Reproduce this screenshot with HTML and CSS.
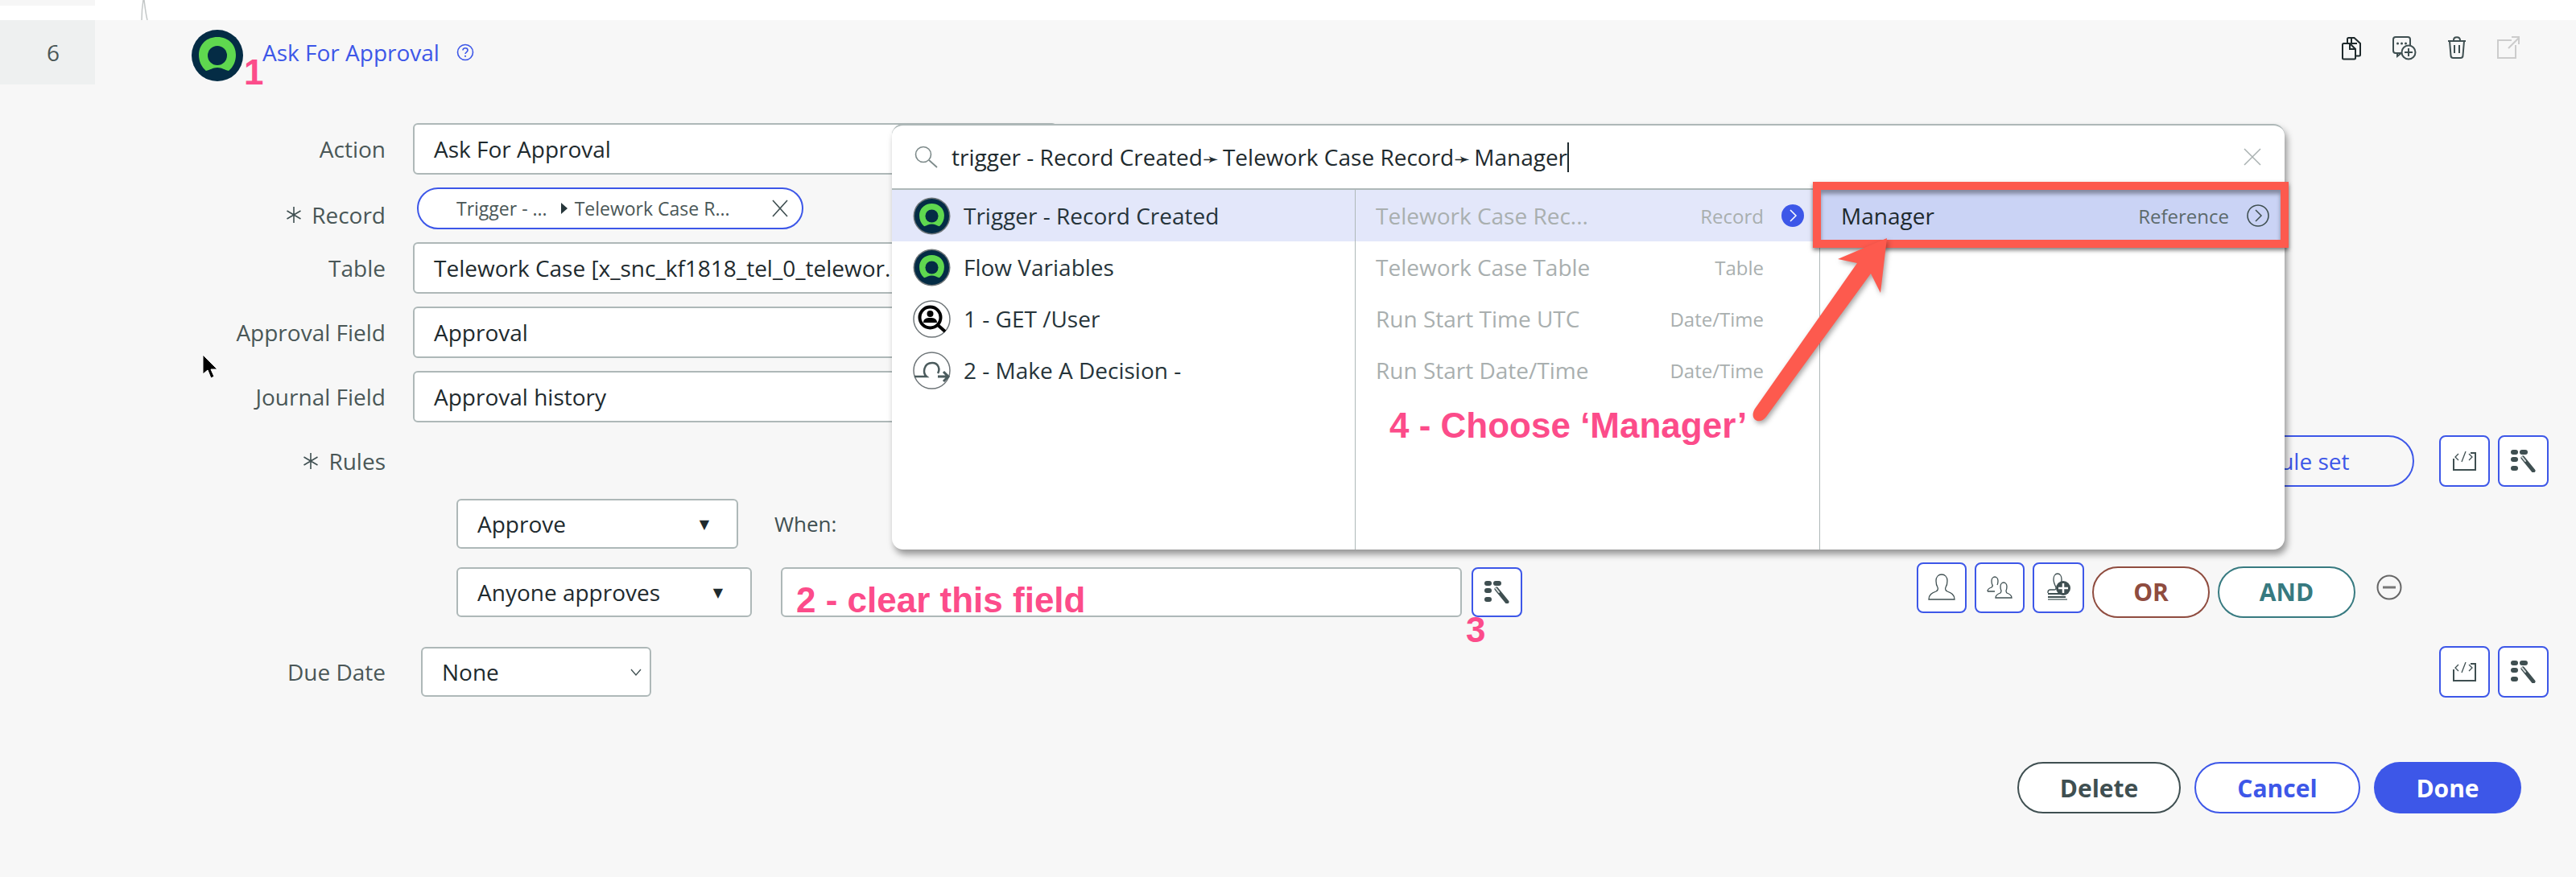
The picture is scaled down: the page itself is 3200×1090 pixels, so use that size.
FILE: index.html
```html
<!DOCTYPE html>
<html lang="en">
<head>
    <meta charset="UTF-8">
    <title>Ask For Approval</title>
    <link rel="stylesheet" href="styles.css">
</head>
<body>
    <svg class="icon-defs" aria-hidden="true">
        <symbol id="logo" viewBox="0 0 64 64">
            <circle cx="32" cy="32" r="32" fill="#042c45"/>
            <path d="M32 9C18 9 9 19 9 31c0 8 3 15 9 20 5-1 8-4 14-4s9 3 14 4c6-5 9-12 9-20C55 19 46 9 32 9z" fill="#5fd84f"/>
            <circle cx="32" cy="32" r="12" fill="#042c45"/>
        </symbol>
        <symbol id="tool" viewBox="0 0 32 28">
            <rect x="0" y="0" width="9" height="6" rx="3" fill="#3f4f51"/>
            <rect x="11" y="0" width="10" height="6" rx="3" fill="#3f4f51"/>
            <rect x="0" y="9" width="9" height="6" rx="3" fill="#3f4f51"/>
            <rect x="0" y="20" width="9" height="6" rx="3" fill="#3f4f51"/>
            <path d="M15 10l13 16" stroke="#3f4f51" stroke-width="5" stroke-linecap="round"/>
            <path d="M14 9l4 5" stroke="#dfe3e3" stroke-width="2" stroke-linecap="round"/>
        </symbol>
        <symbol id="script" viewBox="0 0 30 24">
            <path d="M1 9v14h27V2h-6" fill="none" stroke="#3f4f51" stroke-width="2"/>
            <path d="M7 3L3 7l4 4M20 3l4 4-4 4M11 13l5-13" fill="none" stroke="#3f4f51" stroke-width="1.3"/>
        </symbol>
    </svg>

    <div class="top-strip">
        <div class="top-gutter"></div>
        <svg class="top-line" width="10" height="25"><path d="M2 25C2 16 3 6 4 0M5 0c1 8 2 17 4 25" fill="none" stroke="#c4c8c8" stroke-width="1.5"/></svg>
    </div>

    <div class="step">
        <div class="step-head">
            <div class="step-num">6</div>
            <svg class="step-logo" width="64" height="64"><use href="#logo"/></svg>
            <a class="step-title">Ask For Approval</a>
            <svg class="help-icon" width="22" height="22" viewBox="0 0 22 22">
                <circle cx="11" cy="11" r="9.5" fill="none" stroke="#3d57e8" stroke-width="1.6"/>
                <path d="M8 8.5C8 6.5 9.5 5.8 11 5.8s3 .9 3 2.6c0 2.4-3 2.4-3 4.6" fill="none" stroke="#3d57e8" stroke-width="1.6"/>
                <circle cx="11" cy="15.8" r="1.1" fill="#3d57e8"/>
            </svg>
            <div class="step-actions">
                <svg width="26" height="30" viewBox="0 0 26 30"><path d="M8 8V3.500C8 2.500 8.500 2 9.500 2h7L24 9v14c0 1-.5 1.500-1.500 1.500H18M13 2v7h7" fill="none" stroke="#1f2a2c" stroke-width="2"/><path d="M2 10.500C2 9.500 2.500 9 3.500 9H11l7 7v11c0 1-.5 1.500-1.500 1.500h-13C2.500 28.500 2 28 2 27zM11 9v7h7" fill="#f6f6f6" stroke="#1f2a2c" stroke-width="2"/></svg>
                <svg width="30" height="30" viewBox="0 0 30 30"><path d="M12 21H4c-2 0-3-1-3-3V4c0-2 1-3 3-3h15c2 0 3 1 3 3v7" fill="none" stroke="#3f4f51" stroke-width="2"/><path d="M6 21v4l5-4" fill="none" stroke="#3f4f51" stroke-width="2"/><circle cx="6.500" cy="9" r="1.500" fill="#3f4f51"/><circle cx="11.500" cy="9" r="1.500" fill="#3f4f51"/><circle cx="16.500" cy="9" r="1.500" fill="#3f4f51"/><circle cx="20" cy="20" r="8.500" fill="#f6f6f6" stroke="#3f4f51" stroke-width="2"/><path d="M20 15v10M15 20h10" stroke="#3f4f51" stroke-width="2"/></svg>
                <svg width="24" height="28" viewBox="0 0 24 28"><path d="M1 6h22M8 5c0-5 8-5 8 0M3 6l1.500 18c0 2 1 3 3 3h9c2 0 3-1 3-3L21 6" fill="none" stroke="#3f4f51" stroke-width="2"/><path d="M9 11v10M15 11v10" stroke="#3f4f51" stroke-width="2"/></svg>
                <svg width="28" height="28" viewBox="0 0 28 28"><path d="M18 5H1v22h22V11M14 15L27 2M18 1h9v9" fill="none" stroke="#cccccc" stroke-width="2"/></svg>
            </div>
        </div>

        <div class="form-row row-action">
            <label class="field-label">Action</label>
            <div class="field">Ask For Approval</div>
        </div>
        <div class="form-row row-record">
            <label class="field-label req-label">
                <svg width="20" height="20" viewBox="0 0 20 20"><path d="M10 0v20M1.500 5l17 10M18.500 5l-17 10" stroke="#3f4f51" stroke-width="1.6"/></svg>
                Record
            </label>
            <div class="pill">
                <span>Trigger - ...</span>
                <span class="pill-caret"></span>
                <span class="pill-name">Telework Case R...</span>
                <svg class="pill-x" width="22" height="22" viewBox="0 0 22 22"><path d="M2 1l18 20M20 1L2 21" stroke="#3f4f51" stroke-width="1.600"/></svg>
            </div>
        </div>
        <div class="form-row row-next row-table">
            <label class="field-label">Table</label>
            <div class="field">Telework Case [x_snc_kf1818_tel_0_telewor...</div>
        </div>
        <div class="form-row row-next">
            <label class="field-label">Approval Field</label>
            <div class="field">Approval</div>
        </div>
        <div class="form-row row-next">
            <label class="field-label">Journal Field</label>
            <div class="field">Approval history</div>
        </div>
        <div class="form-row row-next row-rules">
            <label class="field-label req-label">
                <svg width="20" height="20" viewBox="0 0 20 20"><path d="M10 0v20M1.500 5l17 10M18.500 5l-17 10" stroke="#3f4f51" stroke-width="1.6"/></svg>
                Rules
            </label>
            <div class="row-tools">
                <button class="btn-pill btn-outline btn-ruleset">Add rule set</button>
                <button class="btn-square"><svg width="30" height="24"><use href="#script"/></svg></button>
                <button class="btn-square"><svg width="32" height="28"><use href="#tool"/></svg></button>
            </div>
        </div>
        <div class="rule-line rule-first">
            <div class="select-box approve-box">Approve <span class="select-caret">▼</span></div>
            <span class="when">When:</span>
        </div>
        <div class="rule-line rule-second">
            <div class="select-box anyone-box">Anyone approves <span class="select-caret">▼</span></div>
            <div class="field cond-field"></div>
            <button class="btn-square cond-tool"><svg width="32" height="28"><use href="#tool"/></svg></button>
            <div class="rule-actions">
                <button class="btn-user">
                    <svg width="34" height="34" viewBox="0 0 34 34"><path d="M1 32c0-6 4-8 9-10 2-1 3-3 2-5-2-3-2-5-2-8 0-5 3-8 7-8s7 3 7 8c0 3 0 5-2 8-1 2 0 4 2 5 5 2 9 4 9 10z" fill="none" stroke="#3f4f51" stroke-width="1.300"/></svg>
                </button>
                <button class="btn-user">
                    <svg width="32" height="30" viewBox="0 0 32 30"><path d="M1 20c0-3 2-4 5-5 1-1 2-2 1-3-1-2-1-3-1-5 0-3 2-5 4-5s4 2 4 5c0 2 0 3-1 5M1 20h9" fill="none" stroke="#3f4f51" stroke-width="1.300"/><path d="M11 28c0-3 3-5 6-6 1-1 1-2 1-3-1-2-1-3-1-5 0-3 2-5 4-5s4 2 4 5c0 2 0 3-1 5 0 1 0 2 1 3 3 1 6 3 6 6z" fill="none" stroke="#3f4f51" stroke-width="1.300"/></svg>
                </button>
                <button class="btn-user btn-user-wide">
                    <svg width="32" height="36" viewBox="0 0 32 36"><path d="M3 25v-1c0-2 1-3 3-3h5c2 0 2-1 2-3-2-4-3-7-3-10 0-4 2-7 5-7s5 3 5 7c0 2 0 3-.5 5" fill="none" stroke="#3f4f51" stroke-width="1.300"/><path d="M3 26h20M3 30h22" stroke="#3f4f51" stroke-width="2"/><path d="M3 33h24" stroke="#8b9696" stroke-width="2"/><circle cx="22" cy="19" r="9" fill="#3f4f51"/><path d="M22 13v12M16 19h12" stroke="#fff" stroke-width="2.500"/></svg>
                </button>
                <button class="btn-pill btn-or">OR</button>
                <button class="btn-pill btn-and">AND</button>
                <svg class="minus-icon" width="32" height="32" viewBox="0 0 32 32"><circle cx="16" cy="16" r="14.500" fill="none" stroke="#666" stroke-width="2"/><path d="M8 16h16" stroke="#777" stroke-width="3"/></svg>
            </div>
        </div>
        <div class="form-row row-due">
            <label class="field-label">Due Date</label>
            <div class="select-box none-box">None
                <svg width="14" height="9" viewBox="0 0 14 9"><path d="M1 1l6 7 6-7" fill="none" stroke="#3f4f51" stroke-width="1.300"/></svg>
            </div>
            <div class="row-tools">
                <button class="btn-square"><svg width="30" height="24"><use href="#script"/></svg></button>
                <button class="btn-square"><svg width="32" height="28"><use href="#tool"/></svg></button>
            </div>
        </div>
        <div class="form-buttons">
            <button class="btn-pill btn-delete">Delete</button>
            <button class="btn-pill btn-outline btn-cancel">Cancel</button>
            <button class="btn-pill btn-done">Done</button>
        </div>

        <!-- pill picker that opens over the form -->
        <div class="picker">
            <div class="picker-search">
                <svg width="30" height="28" viewBox="0 0 30 28"><circle cx="11" cy="11" r="9.500" fill="none" stroke="#7d8a8a" stroke-width="1.600"/><path d="M18 18l10 9" stroke="#7d8a8a" stroke-width="1.800"/></svg>
                <span class="picker-query">trigger - Record Created<span class="crumb-arrow">➛</span>Telework Case Record<span class="crumb-arrow">➛</span>Manager</span>
                <span class="picker-caret"></span>
                <svg class="picker-x" width="24" height="22" viewBox="0 0 24 22"><path d="M2 1l20 20M22 1L2 21" stroke="#a9b1b1" stroke-width="1.500"/></svg>
            </div>
            <div class="picker-cols">
                <div class="picker-col col-sources">
                    <div class="source-row is-current">
                        <svg class="source-icon" width="47" height="47" viewBox="0 0 47 47"><circle cx="23.500" cy="23.500" r="23" fill="#6f7679"/><svg x="2" y="2" width="43" height="43"><use href="#logo"/></svg></svg>
                        Trigger - Record Created
                    </div>
                    <div class="source-row">
                        <svg class="source-icon" width="47" height="47" viewBox="0 0 47 47"><circle cx="23.500" cy="23.500" r="23" fill="#6f7679"/><svg x="2" y="2" width="43" height="43"><use href="#logo"/></svg></svg>
                        Flow Variables
                    </div>
                    <div class="source-row">
                        <svg class="source-icon" width="47" height="47" viewBox="0 0 47 47"><circle cx="23.500" cy="23.500" r="22.500" fill="#fff" stroke="#6f7679" stroke-width="1.500"/><circle cx="21.500" cy="21.500" r="13" fill="none" stroke="#000" stroke-width="4"/><path d="M31 31l9 8" stroke="#000" stroke-width="4"/><circle cx="21.500" cy="17" r="4" fill="#000"/><path d="M13 28c0-5 4-6 8.500-6s8.500 1 8.500 6z" fill="#000"/></svg>
                        1 - GET /User
                    </div>
                    <div class="source-row">
                        <svg class="source-icon" width="47" height="47" viewBox="0 0 47 47"><circle cx="23.500" cy="23.500" r="22.500" fill="#fff" stroke="#6f7679" stroke-width="1.500"/><path d="M2 31h15c-5-4-4-17 7-17 8 0 10 8 7 13" fill="none" stroke="#4b5b5d" stroke-width="2.500"/><path d="M31 31h13M38 25l6 6-6 6" fill="none" stroke="#4b5b5d" stroke-width="3"/></svg>
                        2 - Make A Decision -
                    </div>
                </div>
                <div class="picker-col col-fields">
                    <div class="field-row is-current">
                        <span class="fr-name">Telework Case Rec...</span><span class="fr-type">Record</span>
                        <svg class="fr-go" width="28" height="28" viewBox="0 0 28 28"><circle cx="14" cy="14" r="14" fill="#3d57e8"/><path d="M11 7l7 7-7 7" fill="none" stroke="#fff" stroke-width="1.500"/></svg>
                    </div>
                    <div class="field-row"><span class="fr-name">Telework Case Table</span><span class="fr-type">Table</span><span class="fr-go"></span></div>
                    <div class="field-row"><span class="fr-name">Run Start Time UTC</span><span class="fr-type">Date/Time</span><span class="fr-go"></span></div>
                    <div class="field-row"><span class="fr-name">Run Start Date/Time</span><span class="fr-type">Date/Time</span><span class="fr-go"></span></div>
                </div>
                <div class="picker-col col-last">
                    <div class="field-row is-picked">
                        <span class="fr-name">Manager</span><span class="fr-type">Reference</span>
                        <svg class="fr-go" width="28" height="28" viewBox="0 0 28 28"><circle cx="14" cy="14" r="13" fill="none" stroke="#3f4f51" stroke-width="1.600"/><path d="M11 7l7 7-7 7" fill="none" stroke="#3f4f51" stroke-width="1.500"/></svg>
                    </div>
                </div>
            </div>
        </div>

        <!-- screenshot annotations -->
        <div class="note-box"></div>
        <svg class="note-arrow" width="200" height="240" viewBox="0 0 200 240">
            <path d="M20 213L147 32 123 27 184 1 176 69 164 45 34 223C26 234 12 226 20 213Z" fill="#fd5a4e"/>
        </svg>
        <span class="note note-1">1</span>
        <span class="note note-2">2 - clear this field</span>
        <span class="note note-3">3</span>
        <span class="note note-4">4 - Choose ‘Manager’</span>
        <svg class="mouse" width="20" height="32" viewBox="0 0 20 32"><path d="M1 1v24l6-5 4 10 4-2-4-9h8z" fill="#000" stroke="#fff" stroke-width="1"/></svg>
    </div>
</body>
</html>
```

FILE: styles.css
```css
* {
    box-sizing: border-box;
}

html, body {
    margin: 0;
    height: 1090px;
    overflow: hidden;
    background-color: #fff;
}

body {
    font-family: "Open Sans", "Liberation Sans", sans-serif;
    font-size: 28px;
    color: #1e2a2e;
}

.icon-defs {
    position: absolute;
    width: 0;
    height: 0;
}

button {
    font-family: inherit;
    cursor: pointer;
}

.top-strip {
    display: flex;
    height: 25px;
    background-color: #fff;
}

.top-gutter {
    width: 118px;
    height: 7px;
    background-color: #f6f6f6;
}

.top-line {
    margin-left: 56px;
}

.step {
    position: relative;
    height: 1065px;
    background-color: #f7f7f7;
}

.step-head {
    display: flex;
    align-items: flex-start;
    height: 80px;
}

.step-num {
    width: 118px;
    height: 80px;
    background-color: #eef0f0;
    color: #4a5757;
    display: flex;
    align-items: center;
    justify-content: center;
    padding-left: 14px;
}

.step-logo {
    margin: 12px 0 0 120px;
}

.step-title {
    margin: 20px 0 0 24px;
    color: #3d57e8;
    line-height: 40px;
}

.help-icon {
    margin: 29px 0 0 21px;
}

.step-actions {
    display: flex;
    align-items: flex-start;
    gap: 38px;
    margin-left: auto;
    margin-right: 70px;
    padding-top: 20px;
}

.form-row {
    display: flex;
    align-items: center;
}

.field-label {
    width: 479px;
    text-align: right;
    color: #4a5757;
    flex-shrink: 0;
}

.req-label {
    display: flex;
    align-items: center;
    justify-content: flex-end;
    gap: 12px;
}

.field {
    width: 800px;
    height: 64px;
    margin-left: 34px;
    padding-left: 24px;
    background-color: #fff;
    border: 2px solid #aeb8b8;
    border-radius: 6px;
    display: flex;
    align-items: center;
    white-space: nowrap;
    overflow: hidden;
}

.row-action {
    margin-top: 48px;
}

.row-record {
    margin-top: 16px;
    height: 52px;
}

.row-record .field-label {
    padding-top: 16px;
}

.row-table {
    margin-top: 28px;
}

.row-next {
    margin-top: 16px;
}

.pill {
    width: 480px;
    height: 52px;
    margin-left: 39px;
    padding: 0 16px 0 47px;
    border: 2.5px solid #3d57e8;
    border-radius: 26px;
    background-color: #fff;
    display: flex;
    align-items: center;
    font-size: 23px;
    color: #4a5757;
}

.pill-caret {
    width: 0;
    height: 0;
    margin: 0 9px 0 17px;
    border-left: 8px solid #26363a;
    border-top: 7px solid transparent;
    border-bottom: 7px solid transparent;
}

.pill-x {
    margin-left: auto;
}

.row-rules {
    height: 64px;
}

.row-tools {
    display: flex;
    gap: 10px;
    margin-left: auto;
    margin-right: 34px;
}

.btn-pill {
    height: 64px;
    border-radius: 32px;
    background-color: #fff;
    font-size: 30px;
    font-weight: 700;
}

.btn-outline {
    border: 2.5px solid #3d57e8;
    color: #3d57e8;
}

.btn-ruleset {
    width: 340px;
    margin-right: 21px;
    padding-left: 28px;
    font-size: 28px;
    font-weight: 400;
    background-color: #f7f7f7;
}

.btn-square {
    width: 63px;
    height: 64px;
    padding: 0;
    display: flex;
    align-items: center;
    justify-content: center;
    background-color: #fff;
    border: 2px solid #3d57e8;
    border-radius: 8px;
}

.rule-line {
    display: flex;
    align-items: center;
    padding-left: 567px;
}

.rule-first {
    margin-top: 15px;
    height: 62px;
}

.rule-second {
    margin-top: 22px;
    height: 64px;
}

.select-box {
    height: 62px;
    padding: 0 34px 0 24px;
    background-color: #fff;
    border: 2px solid #aeb8b8;
    border-radius: 6px;
    display: flex;
    align-items: center;
    justify-content: space-between;
}

.select-caret {
    font-family: "DejaVu Sans", sans-serif;
    font-size: 16px;
}

.approve-box {
    width: 350px;
}

.when {
    margin-left: 45px;
    font-size: 26px;
    color: #3f4f51;
}

.anyone-box {
    width: 367px;
}

.cond-field {
    width: 846px;
    height: 62px;
    margin-left: 36px;
}

.cond-tool {
    margin-left: 12px;
    height: 62px;
}

.rule-actions {
    display: flex;
    align-items: flex-start;
    gap: 10px;
    margin-left: 490px;
}

.btn-user {
    width: 62px;
    height: 63px;
    padding: 0;
    margin-top: -6px;
    display: flex;
    align-items: center;
    justify-content: center;
    background-color: #fff;
    border: 2px solid #3d57e8;
    border-radius: 8px;
}

.btn-user-wide {
    width: 64px;
}

.btn-or {
    width: 146px;
    margin-top: -1px;
    border: 2px solid #8f4c3f;
    color: #8f4c3f;
}

.btn-and {
    width: 171px;
    margin-top: -1px;
    border: 2px solid #377a80;
    color: #377a80;
}

.minus-icon {
    margin: 9px 0 0 16px;
}

.row-due {
    margin-top: 35px;
    height: 64px;
}

.none-box {
    width: 286px;
    margin-left: 44px;
    padding-right: 10px;
}

.form-buttons {
    display: flex;
    justify-content: flex-end;
    gap: 17px;
    margin-top: 80px;
    margin-right: 68px;
}

.btn-delete {
    width: 203px;
    border: 2px solid #3f4f51;
    color: #3f4f51;
}

.btn-cancel {
    width: 206px;
}

.btn-done {
    width: 183px;
    border: none;
    background-color: #3d57e8;
    color: #fff;
}

.picker {
    position: absolute;
    left: 1108px;
    top: 129px;
    width: 1730px;
    height: 529px;
    background-color: #fff;
    border-top: 2px solid #aeb8b8;
    border-radius: 14px;
    box-shadow: 3px 6px 9px rgba(0, 0, 0, 0.4);
    overflow: hidden;
}

.picker-search {
    display: flex;
    align-items: center;
    height: 78px;
    padding: 0 28px;
    border-bottom: 2px solid #aeb8b8;
    box-sizing: content-box;
}

.picker-query {
    margin-left: 16px;
    white-space: nowrap;
    color: #1e2a2e;
}

.crumb-arrow {
    font-family: "DejaVu Sans", sans-serif;
    font-size: 24px;
    display: inline-block;
    width: 25px;
}

.picker-caret {
    width: 2px;
    height: 37px;
    background-color: #1e2a2e;
}

.picker-x {
    margin-left: auto;
}

.picker-cols {
    display: flex;
    height: 449px;
}

.picker-col {
    flex-shrink: 0;
}

.col-sources {
    width: 576px;
    border-right: 1.5px solid #aeb8b8;
}

.col-fields {
    width: 577px;
    border-right: 1.5px solid #aeb8b8;
}

.col-last {
    flex: 1;
}

.source-row {
    display: flex;
    align-items: center;
    gap: 16px;
    height: 64px;
    padding-left: 26px;
    color: #26343a;
}

.source-row.is-current, .field-row.is-current {
    background-color: #e3e7fa;
}

.field-row {
    display: flex;
    align-items: center;
    height: 64px;
    padding: 0 19px 0 25px;
    color: #a9afaf;
}

.fr-type {
    margin-left: auto;
    font-size: 24px;
}

.fr-go {
    width: 28px;
    height: 28px;
    margin-left: 22px;
    flex-shrink: 0;
}

.is-picked {
    background-color: #cad3f5;
    padding-left: 26px;
    color: #1e2a2e;
}

.is-picked .fr-type {
    color: #5c6a6c;
}

/* annotations pasted over the screenshot */
.note-box {
    position: absolute;
    left: 2252px;
    top: 201px;
    width: 591px;
    height: 82px;
    border: 10px solid #fd5a4e;
    box-shadow: 0 3px 5px rgba(0, 0, 0, 0.5), inset 0 5px 5px rgba(0, 0, 0, 0.35);
}

.note-arrow {
    position: absolute;
    left: 2160px;
    top: 270px;
    filter: drop-shadow(2px 3px 3px rgba(0, 0, 0, 0.35));
}

.note {
    position: absolute;
    font-family: "Liberation Sans", Arial, sans-serif;
    font-weight: 700;
    color: #fc4c8a;
    white-space: nowrap;
    line-height: 1;
}

.note-1 {
    left: 303px;
    top: 43px;
    font-size: 44px;
}

.note-2 {
    left: 989px;
    top: 699px;
    font-size: 44px;
}

.note-3 {
    left: 1821px;
    top: 736px;
    font-size: 44px;
}

.note-4 {
    left: 1726px;
    top: 482px;
    font-size: 44px;
}

.mouse {
    position: absolute;
    left: 251px;
    top: 415px;
}
```
